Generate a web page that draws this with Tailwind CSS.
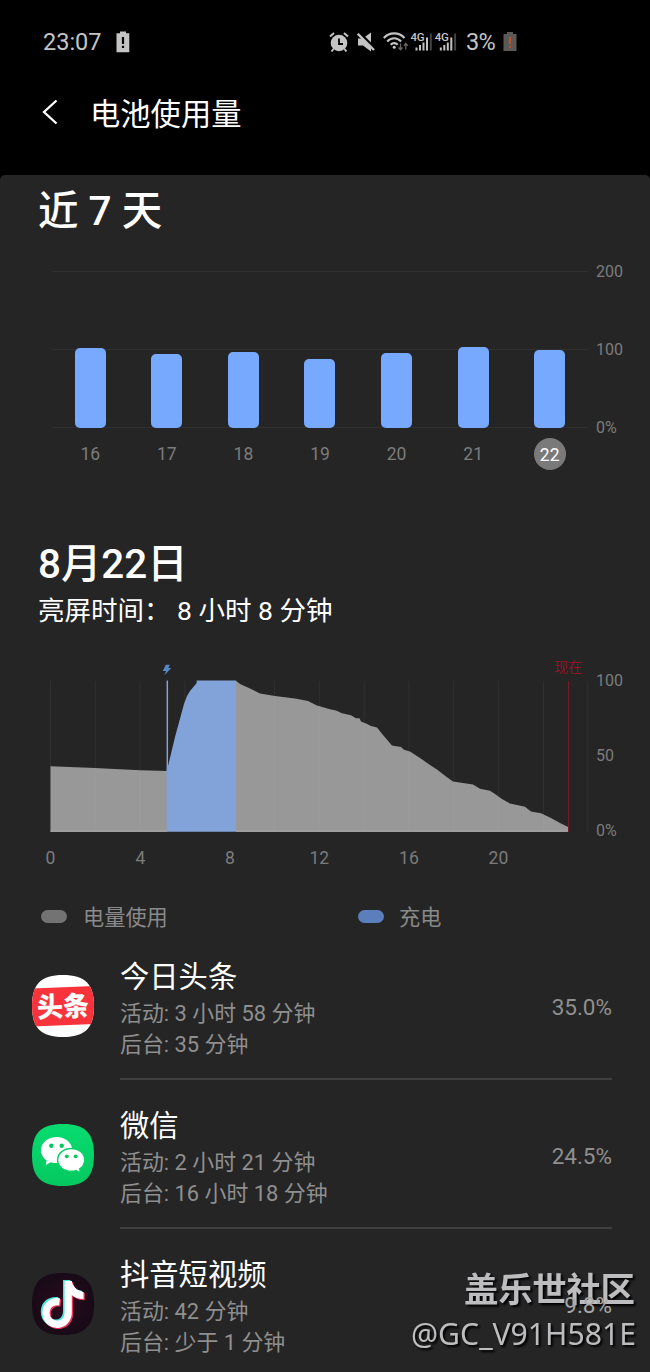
<!DOCTYPE html>
<html lang="zh-CN">
<head>
<meta charset="utf-8">
<title>电池使用量</title>
<script src="https://cdn.jsdelivr.net/npm/@tailwindcss/browser@4"></script>
</head>
<body class="bg-black">
<div class="relative flex h-[1372px] w-[650px] flex-col overflow-hidden whitespace-nowrap bg-black font-['Roboto','Noto_Sans_CJK_SC',sans-serif] text-white">

  <!-- Status bar -->
  <header class="flex h-[83px] shrink-0 items-center pl-[43px] text-[23.5px] leading-none text-[#c4c4c4]">
    <span class="w-[73px] pt-[2px]">23:07</span>
    <svg class="h-[22px] w-[14px]" viewBox="0 0 14 22" fill="#c4c4c4"><path fill-rule="evenodd" d="M4 .5h6v1.7h3.3v19H.5v-19H4zM5.9 6v7h2.2V6zm0 8.700v2.200h2.200v-2.200z"/></svg>
    <svg class="ml-[199px] h-[22px] w-[20px]" viewBox="0 0 20 22"><circle cx="10" cy="12" r="8.300" fill="#c4c4c4"/><path d="M1 5.500 5 2M19 5.500 15 2M4.500 18l-2 2.500M15.500 18l2 2.500" stroke="#c4c4c4" stroke-width="2" fill="none"/><path d="M10 7.500V13h4" stroke="#000" stroke-width="1.800" fill="none"/></svg>
    <svg class="ml-[8px] h-[22px] w-[18px]" viewBox="0 0 18 22"><path d="M1 7.500h4.500L14 1.500v19L6 14.500H1z" fill="#c4c4c4"/><path d="M2 1.500 18 17.500" stroke="#000" stroke-width="3"/><path d="M.8 2.800 17 19" stroke="#c4c4c4" stroke-width="2.400"/></svg>
    <svg class="ml-[8px] h-[22px] w-[26px]" viewBox="0 0 26 22" fill="none" stroke="#c4c4c4" stroke-width="2.100"><path d="M.8 7c5.500-6.200 15.200-6.200 20.700 0M4.200 10.500c3.900-4.300 10-4.300 13.900 0M7.700 13.800c2-2.300 5-2.300 7 0"/><circle cx="11.200" cy="16.300" r="1.500" fill="#c4c4c4" stroke="none"/><path d="M17.500 12.500v6m-2-2 2 2.300 2-2.300M22.800 18.500v-6m-2 2.200 2-2.300 2 2.300" stroke="#666" stroke-width="1.300"/></svg>
    <svg class="ml-[1px] h-[22px] w-[48px]" viewBox="0 0 48 22" fill="#c4c4c4">
      <g id="sim"><path d="M5.500 16.500h2v3h-2zM9 14h2v5.500H9zM12.500 11.500h2v8h-2zM16 6.500h2v13h-2z"/><path d="M19.800 2.500h2v17h-2z" fill="#444"/><text x=".5" y="10" font-size="11.500" font-weight="500" stroke="#000" stroke-width="1.500" paint-order="stroke" textLength="14">4G</text></g>
      <use href="#sim" x="24.300"/>
    </svg>
    <span class="ml-[8px] w-[37px] pt-[2px] tracking-[-.6px]">3%</span>
    <svg class="h-[21px] w-[14px]" viewBox="0 0 14 21"><path d="M4 1h6v2h3.500v17H.5V3H4z" fill="#5b5856"/><path d="M6 6h2v7H6zm0 8.500h2V17H6z" fill="#b5562c"/></svg>
  </header>

  <!-- Title bar -->
  <div class="flex h-[92px] shrink-0 items-start pl-[41px]">
    <svg class="mt-[16px] h-[26px] w-[17px]" viewBox="0 0 17 26" fill="none" stroke="#fff" stroke-width="2.300"><path d="M15.500 1.500 3 13l12.500 11.500"/></svg>
    <h1 class="ml-[32px] mt-[12px] text-[30.3px] leading-[40px]">电池使用量</h1>
  </div>

  <main class="flex flex-1 flex-col rounded-t-[5px] bg-[#252525]">
    <h2 class="mt-[11px] h-[51px] pl-[38px] text-[40.500px] font-medium leading-[50px]">近 7 天</h2>

    <!-- Seven day chart -->
    <section class="mt-[23px] flex h-[230px] pl-[52px]">
      <div class="relative w-[536px]">
        <div class="absolute inset-x-0 top-[11px] flex h-[157px] flex-col justify-between">
          <div class="h-px bg-[#303030]"></div><div class="h-px bg-[#303030]"></div><div class="h-px bg-[#303030]"></div>
        </div>
        <div class="relative grid h-[168px] grid-cols-7 items-end justify-items-center">
          <div class="w-[31px] rounded-[5px] bg-[#76a9ff]" style="height:80.500px"></div>
          <div class="w-[31px] rounded-[5px] bg-[#76a9ff]" style="height:74px"></div>
          <div class="w-[31px] rounded-[5px] bg-[#76a9ff]" style="height:76px"></div>
          <div class="w-[31px] rounded-[5px] bg-[#76a9ff]" style="height:69px"></div>
          <div class="w-[31px] rounded-[5px] bg-[#76a9ff]" style="height:75px"></div>
          <div class="w-[31px] rounded-[5px] bg-[#76a9ff]" style="height:81.500px"></div>
          <div class="w-[31px] rounded-[5px] bg-[#76a9ff]" style="height:78.500px"></div>
        </div>
        <div class="mt-[9px] grid h-[32px] grid-cols-7 items-center justify-items-center text-[17.500px] leading-[34px] text-[#7c7c7c]">
          <span>16</span><span>17</span><span>18</span><span>19</span><span>20</span><span>21</span>
          <span class="size-[32px] rounded-full bg-[#7a7a7a] text-center text-white">22</span>
        </div>
      </div>
      <div class="ml-[8px] mt-px flex h-[178px] flex-col justify-between text-[16px] leading-[22px] text-[#7c7c7c]">
        <span>200</span><span>100</span><span>0%</span>
      </div>
    </section>

    <h2 class="mt-[50px] h-[50px] pl-[38px] text-[40.400px] font-medium leading-[50px]">8月22日</h2>
    <p class="mt-[4px] h-[34px] pl-[38px] text-[26.500px] leading-[34px]">亮屏时间： 8 小时 8 分钟</p>

    <!-- Battery level over the day -->
    <svg class="mt-[22px] h-[240px] w-[650px] shrink-0" viewBox="0 650 650 240">
      <path d="M50.500 681V832M95.300 681V832M140 681V832M184.900 681V832M229.600 681V832M274.600 681V832M319.300 681V832M364.200 681V832M408.900 681V832M453.700 681V832M498.400 681V832M543.500 681V832M587.800 681V832" stroke="#303030"/>
      <path fill="#989898" d="M50.500 831.700V766.300L95 768 140 770.300 167.500 771V831.700zM236 831.700V680.700L240 684 250 688.500 260 693.500 275 696 295 698.500 308 701 317 705.500 330 709.300 336 710.500 342 713.300 351 715.300 356 718.300H359.500L361 721.500 366 723.500 371 726 377 727.500 383 735 389 742 392 745.500 401 747 404 749.700 410 751.500 420 758 430 765 437 769.500 446 776.500 453 781.500 473 784.500 480 788.700 490 790.800 495 794 502 799 510 803.500 525 806.700 531 811.500 541 813.300 551 818 560 823 568 827V831.700z"/>
      <path fill="#82a3da" d="M166.700 831.700V771L168.300 765 175 737 184 704 187 696 190 691 196.700 683V680.500H236V831.700z"/>
      <path d="M95.300 769V831M140 771V831M274.600 697V831M319.300 707V831M364.200 724V831M408.900 752V831M453.700 783V831M498.400 798V831M543.500 816V831" stroke="#9c9c9c"/>
      <path d="M50.500 831.200H166.700M236 831.200H568" stroke="#adadad"/>
      <path d="M167.300 680.500V775" stroke="#82a3da" stroke-width="1.500"/>
      <path d="M568.600 681V832" stroke="#741a24" stroke-width="1.200"/>
      <path d="M165.800 664.800H169.800L168.300 668.100H171.200L164.500 675.200 166 670.900H162.800z" fill="#5789c4"/>
      <text x="554.300" y="672" font-size="14" fill="#8e1529">现在</text>
      <g fill="#7c7c7c" font-size="16"><text x="596" y="686">100</text><text x="596" y="761">50</text><text x="596" y="836">0%</text></g>
      <g fill="#7c7c7c" font-size="17.500" text-anchor="middle"><text x="50.500" y="863.500">0</text><text x="140.300" y="863.500">4</text><text x="229.800" y="863.500">8</text><text x="319.300" y="863.500">12</text><text x="408.900" y="863.500">16</text><text x="498.400" y="863.500">20</text></g>
    </svg>

    <div class="mt-[11px] flex h-[30px] shrink-0 items-center pl-[41px] text-[21.200px] leading-[30px] text-[#8a8a8a]">
      <span class="h-[13px] w-[26px] rounded-full bg-[#737373]"></span>
      <span class="ml-[16px] w-[275px] pt-[3px]">电量使用</span>
      <span class="h-[13px] w-[26px] rounded-full bg-[#5b7fbd]"></span>
      <span class="ml-[15px] pt-[3px]">充电</span>
    </div>

    <!-- Apps -->
    <ul class="shrink-0 pl-[32px]">
      <li class="flex h-[149px]">
        <svg class="mt-[44px] size-[62px]" viewBox="0 0 62 62">
          <defs><clipPath id="sq"><path d="M31 0C53 0 62 9 62 31S53 62 31 62 0 53 0 31 9 0 31 0z"/></clipPath></defs>
          <g clip-path="url(#sq)"><path fill="#fff" d="M0 0h62v62H0z"/><path fill="#f8333c" d="M0 13.500 62 11V49L0 51.500z"/></g>
          <text x="5" y="41.500" font-size="27.500" font-weight="900" fill="#fff" transform="rotate(-2.500 31 31)" textLength="52" lengthAdjust="spacingAndGlyphs">头条</text>
        </svg>
        <div class="ml-[26px] flex w-[492px] justify-between border-b-2 border-[#3f3f3f]">
          <div class="text-[21.900px] text-[#8f8f8f]">
            <h3 class="mt-[25px] text-[29.300px] leading-[42px] text-white">今日头条</h3>
            <p class="leading-[31px]">活动: 3 小时 58 分钟</p>
            <p class="leading-[32px]">后台: 35 分钟</p>
          </div>
          <span class="mt-[60px] text-[22.500px] leading-[32px] text-[#8f8f8f]">35.0%</span>
        </div>
      </li>
      <li class="flex h-[149px]">
        <svg class="mt-[44px] size-[62px]" viewBox="0 0 62 62">
          <defs><linearGradient id="wx" x2="0" y2="1"><stop stop-color="#08dc70"/><stop offset="1" stop-color="#04c85f"/></linearGradient></defs>
          <path fill="url(#wx)" d="M31 0C53 0 62 9 62 31S53 62 31 62 0 53 0 31 9 0 31 0z"/>
          <path fill="#fff" d="M24.500 13C16 13 9 18.800 9 26.200c0 4.200 2.200 7.700 5.600 10.200L13.800 41l5-2.800c1.800.6 3.700.9 5.700.9 8.700 0 15.800-5.800 15.800-13S33.200 13 24.500 13z"/>
          <path fill="#fff" stroke="#06d268" stroke-width="1.500" d="M39.300 24.500c-7.700 0-13.700 5-13.700 11.400 0 6.300 6 11.400 13.700 11.400 1.700 0 3.300-.2 4.800-.7l4.500 2.500-.9-4.200c3.100-2.100 5.100-5.300 5.100-9 0-6.400-5.800-11.400-13.500-11.400z"/>
          <g fill="#06c862"><circle cx="19.300" cy="21.700" r="2.200"/><circle cx="29.700" cy="21.700" r="2.200"/><circle cx="34.800" cy="32.300" r="1.900"/><circle cx="43.700" cy="32.300" r="1.900"/></g>
        </svg>
        <div class="ml-[26px] flex w-[492px] justify-between border-b-2 border-[#3f3f3f]">
          <div class="text-[21.900px] text-[#8f8f8f]">
            <h3 class="mt-[25px] text-[29.300px] leading-[42px] text-white">微信</h3>
            <p class="leading-[31px]">活动: 2 小时 21 分钟</p>
            <p class="leading-[32px]">后台: 16 小时 18 分钟</p>
          </div>
          <span class="mt-[60px] text-[22.500px] leading-[32px] text-[#8f8f8f]">24.5%</span>
        </div>
      </li>
      <li class="flex h-[149px]">
        <svg class="mt-[44px] size-[62px]" viewBox="0 0 62 62">
          <defs><radialGradient id="dy"><stop stop-color="#2c0c20"/><stop offset="1" stop-color="#180a16"/></radialGradient>
          <g id="note"><path fill="none" stroke-width="7.200" d="M26.500 28.200C18 27.200 13 32.500 13 39c0 7 5 11.700 11 11.700 6.500 0 11.200-5 11.200-11.700V7.500"/><path stroke="none" d="M38 7.500h.8c.7 5.500 5 9.800 11.700 10.800v7.200c-5 0-9-1.500-12.500-4.500z"/></g></defs>
          <path fill="url(#dy)" d="M31 0C53 0 62 9 62 31S53 62 31 62 0 53 0 31 9 0 31 0z"/>
          <use href="#note" x="-.6" y="-.500" fill="#45e5df" stroke="#45e5df"/><use href="#note" x="2.300" y="1.700" fill="#ee3158" stroke="#ee3158"/><use href="#note" x="1" y=".600" fill="#fff" stroke="#fff"/>
        </svg>
        <div class="ml-[26px] flex w-[492px] justify-between">
          <div class="text-[21.900px] text-[#8f8f8f]">
            <h3 class="mt-[25px] text-[29.300px] leading-[42px] text-white">抖音短视频</h3>
            <p class="leading-[31px]">活动: 42 分钟</p>
            <p class="leading-[32px]">后台: 少于 1 分钟</p>
          </div>
          <span class="relative z-10 mt-[60px] text-[22.500px] leading-[32px] text-[#a8a8a8]">9.8%</span>
        </div>
      </li>
    </ul>
  </main>

  <!-- Watermark -->
  <svg class="absolute bottom-0 right-0 h-[112px] w-[250px] drop-shadow-[2px_2px_1px_#000]" viewBox="400 1260 250 112" fill="#bdbdbf">
    <text x="464" y="1302" font-size="34.500" font-weight="700" textLength="171">盖乐世社区</text>
    <text class="font-['Noto_Sans',sans-serif]" x="411" y="1344.500" font-size="30.500" textLength="225" lengthAdjust="spacingAndGlyphs">@GC_V91H581E</text>
  </svg>
</div>
</body>
</html>
